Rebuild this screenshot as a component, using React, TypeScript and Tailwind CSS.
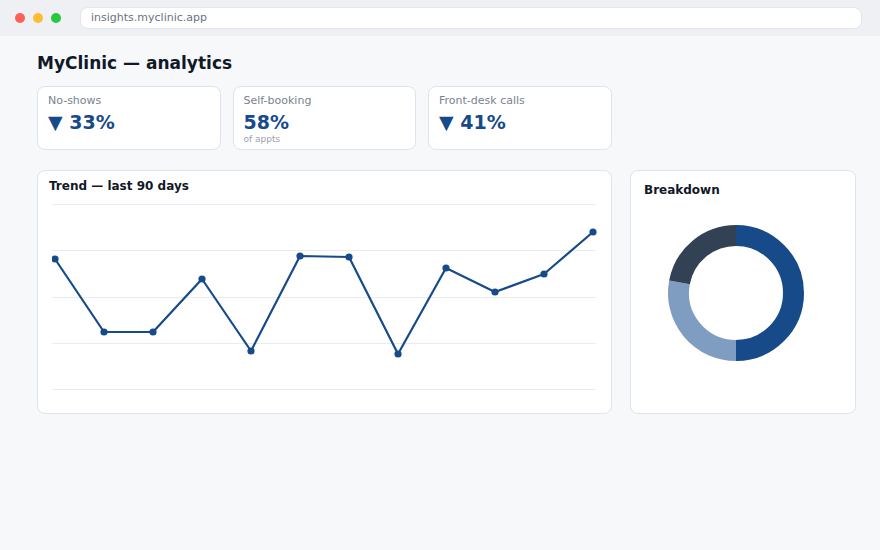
import React from "react";

const pts: [number, number][] = [
  [55, 259], [104, 332], [153, 332], [202, 279], [251, 351], [300, 256],
  [349, 257], [398, 354], [446, 268], [495, 292], [544, 274], [593, 232],
];

function Kpi({ label, value, sub, arrow }: { label: string; value: string; sub?: string; arrow?: boolean }) {
  return (
    <div className="w-[183.5px] h-[64px] bg-white border border-[#dfe3eb] rounded-[8px] px-[10px] pt-[7px]">
      <div className="text-[11px] leading-[14px] text-[#7a8291]">{label}</div>
      <div className="text-[19px] leading-[24px] font-bold text-[#174a89] mt-[2px]">
        {arrow ? "▼ " : ""}{value}
      </div>
      {sub && <div className="text-[9px] leading-[10px] text-[#9aa1ad]">{sub}</div>}
    </div>
  );
}

function arc(cx: number, cy: number, r: number, a0: number, a1: number) {
  const p = (a: number) => {
    const rad = ((a - 90) * Math.PI) / 180;
    return [cx + r * Math.cos(rad), cy + r * Math.sin(rad)];
  };
  const [x0, y0] = p(a0);
  const [x1, y1] = p(a1);
  const large = a1 - a0 > 180 ? 1 : 0;
  return `M ${x0} ${y0} A ${r} ${r} 0 ${large} 1 ${x1} ${y1}`;
}

export default function App() {
  const ox = 52;
  const oy = 198;
  const poly = pts.map(([x, y]) => `${x - ox},${y - oy}`).join(" ");
  return (
    <div className="w-[880px] h-[550px] bg-[#f7f8fa] font-['DejaVu_Sans',sans-serif] overflow-hidden">
      <div className="h-[36px] bg-[#eef0f4] flex items-center pl-[15px] pr-[18px]">
        <div className="flex gap-[8px]">
          <div className="w-[10px] h-[10px] rounded-full bg-[#fe5f57]" />
          <div className="w-[10px] h-[10px] rounded-full bg-[#febc2e]" />
          <div className="w-[10px] h-[10px] rounded-full bg-[#28c840]" />
        </div>
        <div className="ml-[19px] flex-1 h-[22px] bg-white rounded-[8px] border border-[#e3e6ec] flex items-center px-[10px] text-[11px] text-[#6b7280]">
          insights.myclinic.app
        </div>
      </div>
      <div className="pl-[37px] pt-[16px]">
        <div className="text-[17px] leading-[22px] font-bold text-[#111827]">MyClinic — analytics</div>
        <div className="flex gap-[12px] mt-[12px]">
          <Kpi label="No-shows" value="33%" arrow />
          <Kpi label="Self-booking" value="58%" sub="of appts" />
          <Kpi label="Front-desk calls" value="41%" arrow />
        </div>
        <div className="flex gap-[18px] mt-[20px]">
          <div className="w-[575px] h-[244px] bg-white border border-[#dfe3eb] rounded-[8px] px-[11px] pt-[8px]">
            <div className="text-[12px] leading-[14px] font-bold text-[#111827]">Trend — last 90 days</div>
            <svg width="548" height="200" className="mt-[5px] ml-[3px]" viewBox="0 0 548 200">
              {[204, 250, 297, 343, 389].map((y) => (
                <line key={y} x1={0} x2={544} y1={y - oy + 0.5} y2={y - oy + 0.5} stroke="#e8ecf2" strokeWidth="1" />
              ))}
              <polyline points={poly} fill="none" stroke="#174a89" strokeWidth="2.2" strokeLinejoin="round" />
              {pts.map(([x, y], i) => (
                <circle key={i} cx={x - ox} cy={y - oy} r="3.6" fill="#174a89" />
              ))}
            </svg>
          </div>
          <div className="w-[226px] h-[244px] bg-white border border-[#dfe3eb] rounded-[8px] px-[13px] pt-[12px]">
            <div className="text-[12px] leading-[14px] font-bold text-[#111827]">Breakdown</div>
            <svg width="200" height="200" viewBox="0 0 200 200" className="-mt-[8px]">
              <path d={arc(92, 104, 57.5, 0, 180)} fill="none" stroke="#174a89" strokeWidth="21" />
              <path d={arc(92, 104, 57.5, 180, 280.6)} fill="none" stroke="#7f9dc0" strokeWidth="21" />
              <path d={arc(92, 104, 57.5, 280.6, 360)} fill="none" stroke="#334155" strokeWidth="21" />
            </svg>
          </div>
        </div>
      </div>
    </div>
  );
}
